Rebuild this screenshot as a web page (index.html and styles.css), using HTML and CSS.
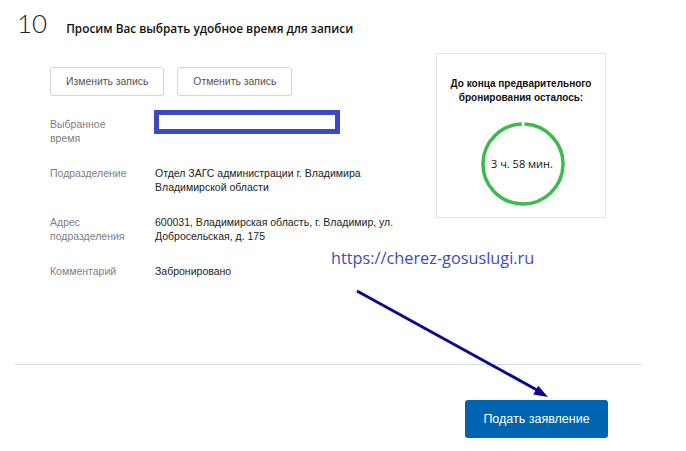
FILE: index.html
```html
<!DOCTYPE html>
<html lang="ru">
<head>
    <meta charset="UTF-8">
    <meta name="viewport" content="width=device-width, initial-scale=1.0">
    <title>Запись</title>
    <link rel="stylesheet" href="styles.css">
</head>
<body>
    <div class="step-header">
        <span class="step-number">10</span>
        <h1 class="step-title">Просим Вас выбрать удобное время для записи</h1>
    </div>

    <div class="main">
        <div class="details">
            <div class="actions">
                <button class="light-button">Изменить запись</button>
                <button class="light-button">Отменить запись</button>
            </div>

            <div class="row">
                <div class="label">Выбранное<br>время</div>
                <div class="value"><div class="hidden-time"></div></div>
            </div>
            <div class="row">
                <div class="label">Подразделение</div>
                <div class="value">Отдел ЗАГС администрации г. Владимира<br>Владимирской области</div>
            </div>
            <div class="row">
                <div class="label">Адрес<br>подразделения</div>
                <div class="value">600031, Владимирская область, г. Владимир, ул.<br>Добросельская, д. 175</div>
            </div>
            <div class="row">
                <div class="label">Комментарий</div>
                <div class="value">Забронировано</div>
            </div>
        </div>

        <div class="timer-box">
            <p class="timer-caption">До конца предварительного<br>бронирования осталось:</p>
            <div class="timer">
                <svg width="88" height="88" viewBox="0 0 88 88">
                    <circle cx="44" cy="44" r="40" fill="none" stroke="#3dba4e" stroke-width="3.5"
                            stroke-dasharray="248.3 3" transform="rotate(-88 44 44)"/>
                </svg>
                <span class="timer-text">3 ч. 58 мин.</span>
            </div>
        </div>
    </div>

    <hr class="divider">

    <div class="footer">
        <button class="submit-button">Подать заявление</button>
    </div>

    <!-- watermark and arrow drawn on top of the screenshot -->
    <div class="site-link">https://cherez-gosuslugi.ru</div>
    <svg class="arrow" width="686" height="451" viewBox="0 0 686 451">
        <line x1="357" y1="291" x2="537" y2="390" stroke="#0a0a8c" stroke-width="3"/>
        <polygon points="548,397 533.3,394.6 538.2,385.8" fill="#0a0a8c"/>
    </svg>
</body>
</html>
```

FILE: styles.css
```css
body {
    margin: 0;
    font-family: "Liberation Sans", Arial, sans-serif;
    background-color: #fff;
    color: #333;
    position: relative;
    width: 686px;
    height: 451px;
    overflow: hidden;
}

.step-header {
    display: flex;
    align-items: baseline;
    padding: 10px 0 0 17px;
    height: 26px;
}

.step-number {
    font-family: Lato, sans-serif;
    font-weight: 300;
    font-size: 26px;
    line-height: 26px;
    color: #222;
    margin-right: 19px;
}

.step-title {
    margin: 0;
    font-family: "Open Sans", sans-serif;
    font-size: 11.8px;
    font-weight: 600;
    color: #111;
}

.main {
    display: flex;
    margin-top: 17px;
}

.details {
    width: 436px;
    box-sizing: border-box;
    padding: 14px 0 0 50px;
}

.actions {
    display: flex;
    gap: 13px;
    margin-bottom: 21px;
}

.light-button {
    height: 29px;
    padding: 0 15px;
    background-color: #fff;
    border: 1px solid #d3d3d3;
    border-radius: 3px;
    font-family: "Liberation Sans", Arial, sans-serif;
    font-size: 10.4px;
    color: #555;
}

.row {
    display: flex;
    font-size: 10.5px;
    line-height: 14px;
    margin-bottom: 21px;
    min-height: 28px;
}

.row:last-child {
    margin-bottom: 0;
    min-height: 0;
}

.label {
    width: 105px;
    flex-shrink: 0;
    color: #808080;
}

.value {
    color: #222;
    white-space: nowrap;
}

.hidden-time {
    width: 176px;
    height: 14px;
    border: 5px solid #3e48c1;
    margin-top: -7px;
    margin-left: -1px;
}

.timer-box {
    width: 170px;
    height: 165px;
    box-sizing: border-box;
    border: 1px solid #e2e2e2;
    text-align: center;
}

.timer-caption {
    margin: 23px 0 0;
    font-size: 10px;
    font-weight: bold;
    line-height: 14px;
    color: #111;
}

.timer {
    position: relative;
    width: 88px;
    height: 88px;
    margin: 15px auto 0;
    left: 2px;
}

.timer svg {
    display: block;
}

.timer-text {
    position: absolute;
    left: -2px;
    right: 0;
    top: 36px;
    font-family: "Open Sans", sans-serif;
    font-size: 11px;
    color: #111;
}

.divider {
    margin: 86px 44px 0 15px;
    border: none;
    border-top: 1px solid #dcdcdc;
}

.footer {
    display: flex;
    justify-content: flex-end;
    padding-right: 78px;
    margin-top: 35px;
}

.submit-button {
    width: 143px;
    height: 38px;
    border: none;
    border-radius: 3px;
    background-color: #0064b0;
    color: #fff;
    font-family: "Liberation Sans", Arial, sans-serif;
    font-size: 12.5px;
}

.site-link {
    position: absolute;
    left: 331px;
    top: 248px;
    font-family: "Open Sans", sans-serif;
    font-size: 16.3px;
    line-height: 20px;
    color: #3b4dbd;
}

.arrow {
    position: absolute;
    left: 0;
    top: 0;
    pointer-events: none;
}
```
